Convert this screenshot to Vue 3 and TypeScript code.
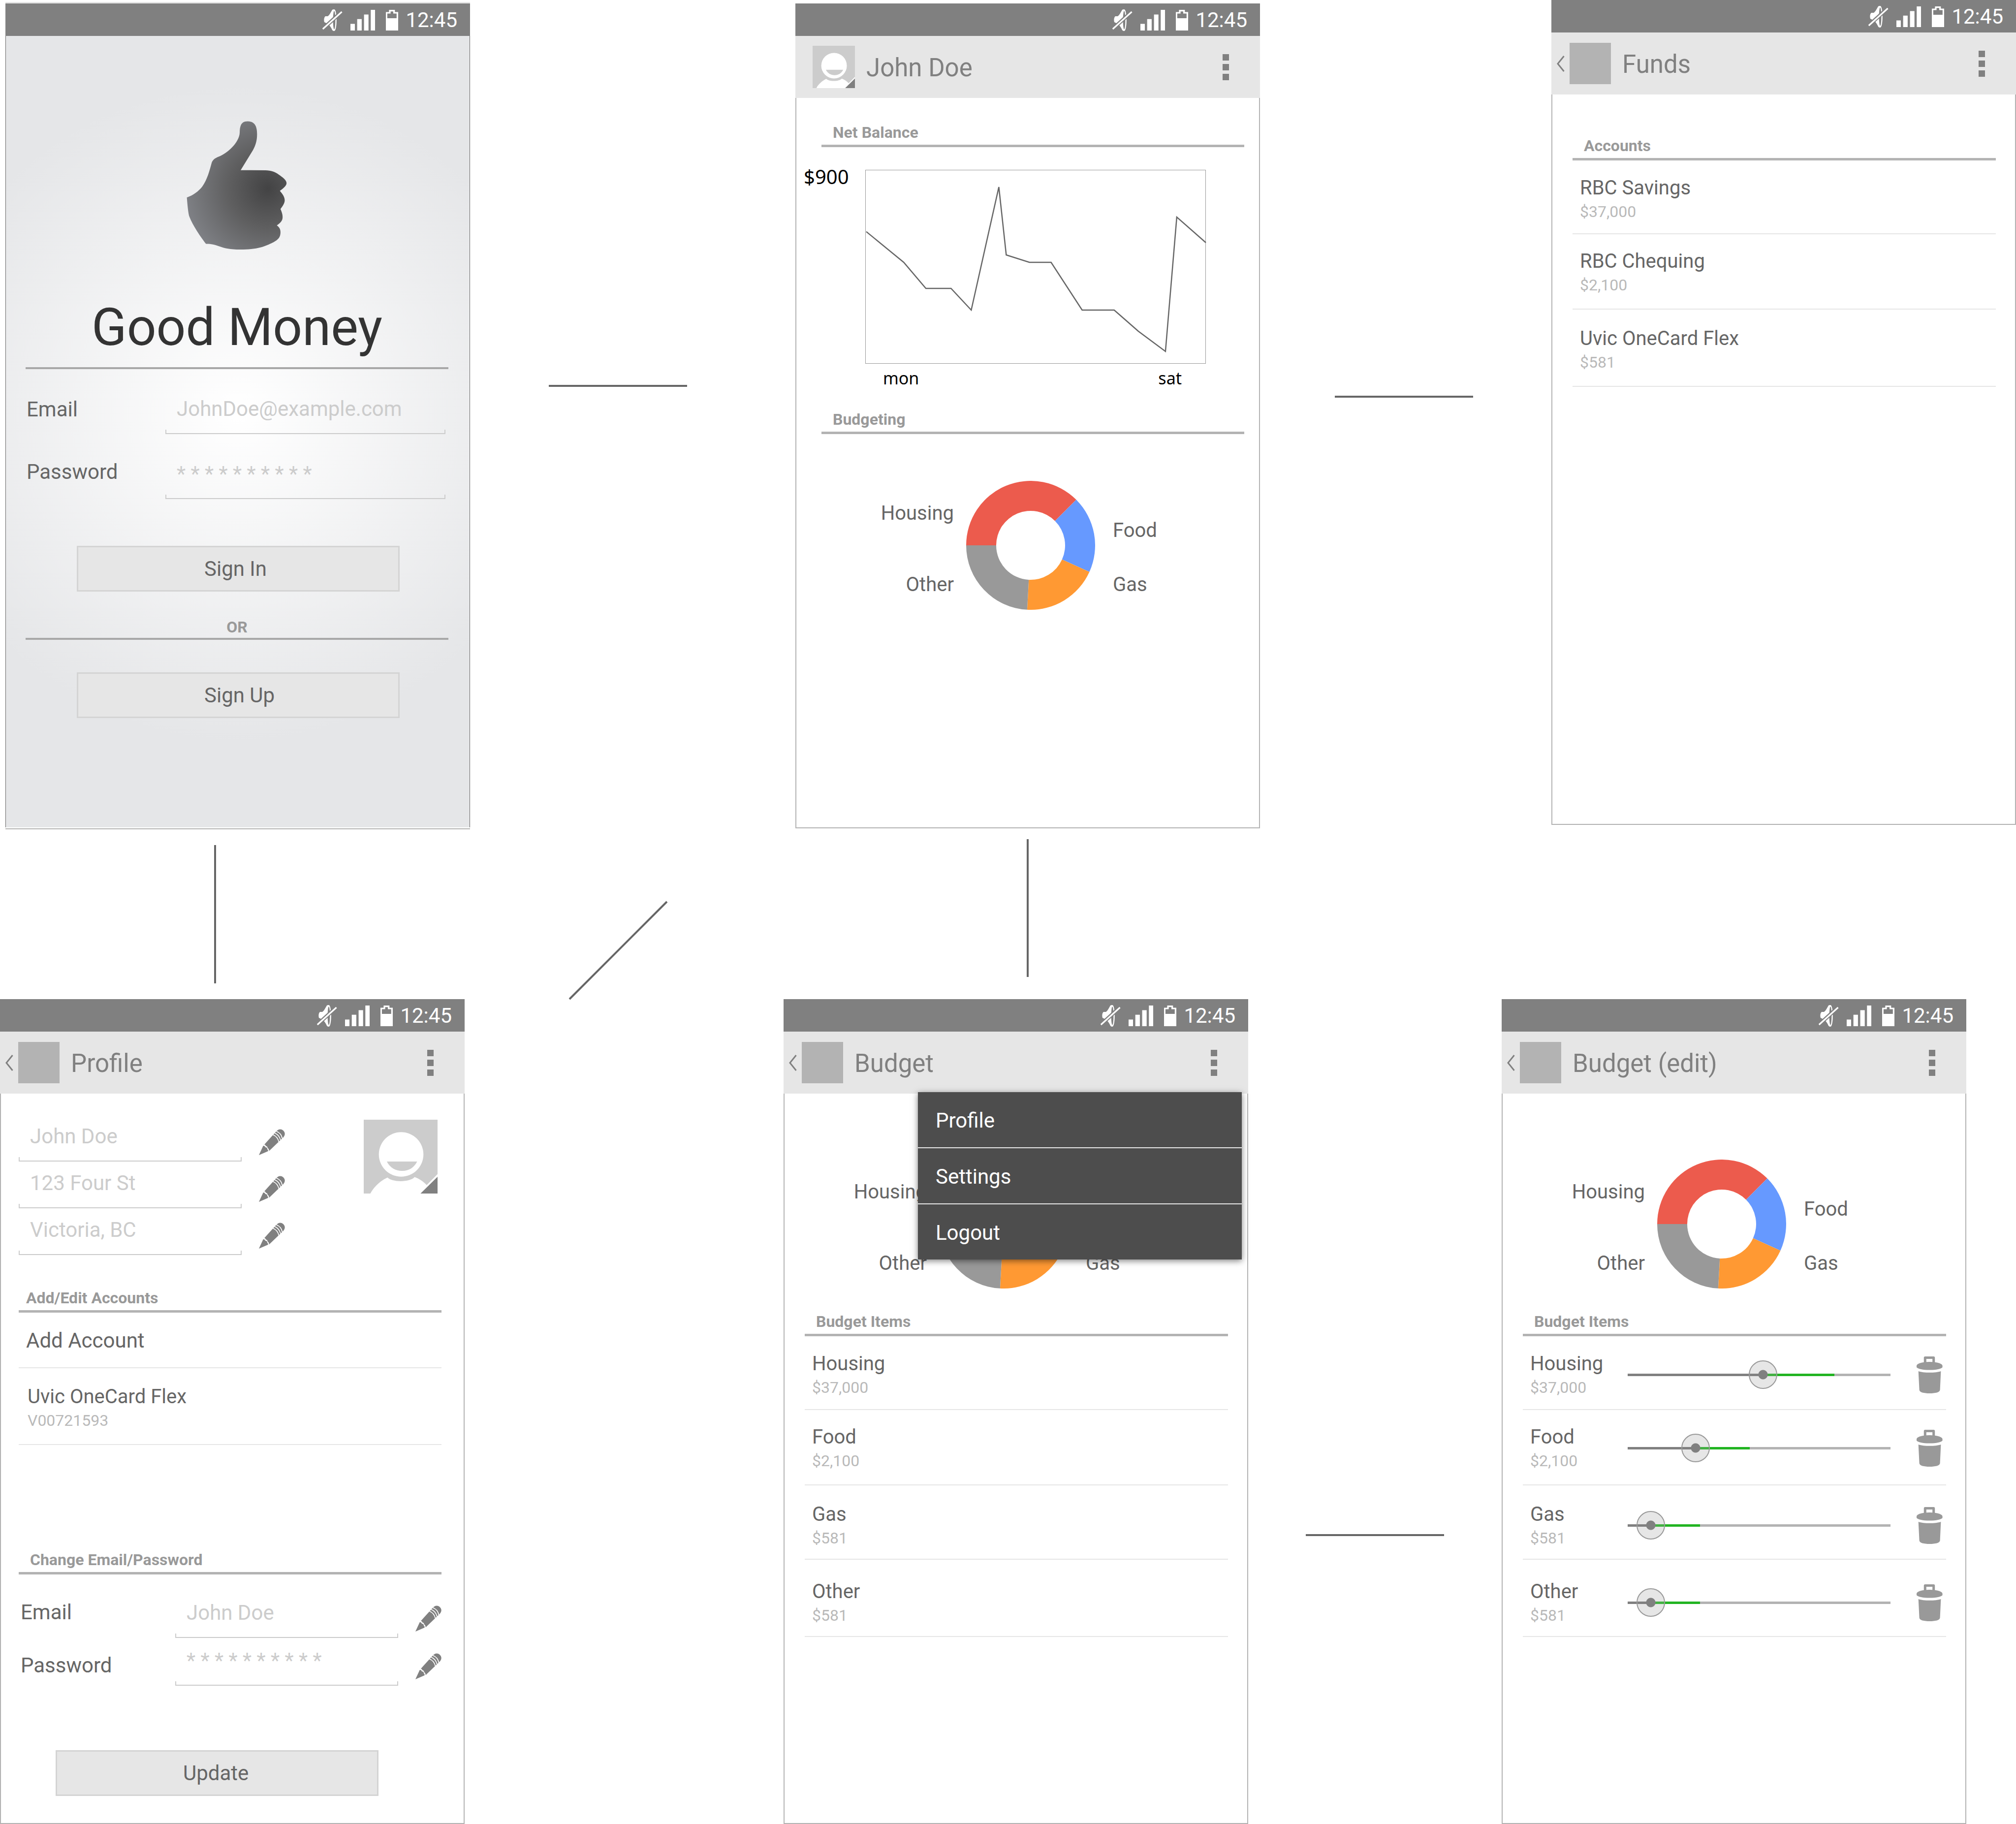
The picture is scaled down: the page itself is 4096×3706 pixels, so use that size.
<script setup lang="ts">
type ScreenKind = 'login' | 'home' | 'funds' | 'profile' | 'budget' | 'edit'

interface Screen {
  kind: ScreenKind
  title?: string
}

interface Entry {
  name: string
  amount: string
}

interface BudgetEntry extends Entry {
  id: string
  value: number
  spent: number
  limit: number
}

const rows: { name: string; screens: Screen[] }[] = [
  {
    name: 'upper',
    screens: [{ kind: 'login' }, { kind: 'home', title: 'John Doe' }, { kind: 'funds', title: 'Funds' }],
  },
  {
    name: 'lower',
    screens: [
      { kind: 'profile', title: 'Profile' },
      { kind: 'budget', title: 'Budget' },
      { kind: 'edit', title: 'Budget (edit)' },
    ],
  },
]

const accounts: Entry[] = [
  { name: 'RBC Savings', amount: '$37,000' },
  { name: 'RBC Chequing', amount: '$2,100' },
  { name: 'Uvic OneCard Flex', amount: '$581' },
]

const budget: BudgetEntry[] = [
  { id: 'housing', name: 'Housing', amount: '$37,000', value: 51.7, spent: 51.5, limit: 78.7 },
  { id: 'food', name: 'Food', amount: '$2,100', value: 22.8, spent: 25.8, limit: 46.4 },
  { id: 'gas', name: 'Gas', amount: '$581', value: 3.8, spent: 8.8, limit: 27.5 },
  { id: 'other', name: 'Other', amount: '$581', value: 3.8, spent: 8.8, limit: 27.5 },
]

const details = [
  { id: 'full-name', label: 'Name', hint: 'John Doe' },
  { id: 'street', label: 'Street', hint: '123 Four St' },
  { id: 'city', label: 'City', hint: 'Victoria, BC' },
]

const menu = ['Profile', 'Settings', 'Logout']
const stars = '* * * * * * * * * *'

// Ring segment between two clockwise angles, in degrees from the positive x axis.
function segment(from: number, to: number): string {
  const outer = 131
  const inner = 70
  const at = (r: number, deg: number) => {
    const a = (deg * Math.PI) / 180
    return `${(131 + r * Math.cos(a)).toFixed(2)} ${(131 + r * Math.sin(a)).toFixed(2)}`
  }
  return `M${at(outer, from)} A${outer} ${outer} 0 0 1 ${at(outer, to)} L${at(inner, to)} A${inner} ${inner} 0 0 0 ${at(inner, from)}Z`
}

const segments = [
  { color: '#ec5b4d', d: segment(180, 315) },
  { color: '#6699ff', d: segment(315, 384.3) },
  { color: '#ff9933', d: segment(24.3, 93.1) },
  { color: '#999999', d: segment(93.1, 180) },
]

const hasDonut = (kind: ScreenKind) => kind === 'home' || kind === 'budget' || kind === 'edit'
</script>

<template>
  <svg class="sprite" aria-hidden="true">
    <symbol id="mute" viewBox="0 0 41 44">
      <path fill="#fff" d="M4 26C3 22 3 17 6 14H11C15 11 17 6 20 1Q21 0 24 0C27 0 28.8 10 28.8 22S27 44 24 44Q21 44 20 42C18 37 15 33 12 30Z" />
      <ellipse cx="24" cy="22" rx="2.4" ry="18.5" fill="#808080" />
      <path d="M-1 41.500 40 4" stroke="#808080" stroke-width="7.500" />
      <path d="M.8 40 39.500 5" stroke="#fff" stroke-width="3.200" />
    </symbol>
    <symbol id="signal" viewBox="0 0 50 42">
      <path fill="#fff" d="M0 28.500H9V42H0ZM13.700 18.800H22.900V42H13.700ZM27.600 9.500H36.700V42H27.600ZM41.300 0H50.300V42H41.300Z" />
    </symbol>
    <symbol id="battery" viewBox="0 0 25 42">
      <path fill="#fff" fill-rule="evenodd" d="M6.400 0H18.300V4.400H25V42H0V4.400H6.400ZM9.600 3.200V7.600H2.900V17H21.800V7.600H15V3.200Z" />
    </symbol>
    <symbol id="avatar" viewBox="0 0 150 150">
      <path fill="#ccc" d="M0 0H150V150H0Z" />
      <circle cx="76" cy="70.500" r="45.300" fill="#fff" />
      <path fill="#ccc" d="M47 85H108.500C102 97.500 92 104 78 104S53.500 97.500 47 85Z" />
      <path fill="#fff" d="M13.500 150C20 137 34 124 48.400 117.500C58 127.500 94 127.500 103.400 116.500C113 120 122 126 128.500 133.400L112 150Z" />
      <path fill="#fff" d="M150 110.500V116L115.500 150H111Z" />
      <path fill="#808080" d="M150 116V150H115.500Z" />
    </symbol>
    <symbol id="pencil" viewBox="0 0 53 53">
      <path fill="#808080" d="M0 53 8.800 34C10.500 33.500 12.500 34.500 13 37C15.500 37 17.300 38.500 17 41C18.500 42 19 43.500 18.600 45Z" />
      <path fill="#808080" d="M11 31.500 34.500 5.500C39 .3 44.500-1.500 49.500 3C54 7.500 53.500 12.500 49.500 17L20.800 44.500C20.800 41.500 19.500 39.500 17.800 38.500C17.300 35.500 16 34.500 14 34.500C13.800 32.800 12.600 31.700 11 31.500Z" />
      <path fill="none" stroke="#fff" stroke-width="1.700" d="M28.500 11.500Q38 15.500 40.500 26M32 8Q41.500 12 44 22.500M35.500 4.500Q45.500 8.500 47.500 19" />
    </symbol>
    <symbol id="trash" viewBox="0 0 53 75">
      <path fill="#999" fill-rule="evenodd" d="M14.800 12V2.500Q14.800 0 17.300 0H34.700Q37.200 0 37.200 2.500V12ZM19.800 5V12H32.200V5Z" />
      <path fill="#999" d="M0 19C0 15 10 11 26.300 11S52.600 15 52.600 19V22C50 25.500 40 27.600 26.300 27.600S2.500 25.500 0 22Z" />
      <path fill="#999" d="M3.700 30C15 33.800 38 33.800 49.400 30L47.600 68C47 73 38 75 26.500 75S6 73 5.600 68Z" />
    </symbol>
  </svg>

  <main class="board">
    <div v-for="row in rows" :key="row.name" class="row" :class="row.name">
      <article v-for="screen in row.screens" :key="screen.kind" class="phone" :class="screen.kind">
        <div class="status">
          <svg class="mute"><use href="#mute" /></svg>
          <svg class="signal"><use href="#signal" /></svg>
          <svg class="battery"><use href="#battery" /></svg>
          <time class="clock">12:45</time>
        </div>

        <header v-if="screen.title" class="bar">
          <svg v-if="screen.kind === 'home'" class="avatar-small"><use href="#avatar" /></svg>
          <button v-else class="back" type="button" aria-label="Back">
            <svg class="chevron" viewBox="0 0 17 33">
              <path d="M15.500 1 3 16.500 15.500 32" fill="none" stroke="#808080" stroke-width="3" />
            </svg>
            <span class="app-icon"></span>
          </button>
          <h1 class="title">{{ screen.title }}</h1>
          <button class="more" type="button" aria-label="More options"><i></i><i></i><i></i></button>

          <nav v-if="screen.kind === 'budget'" class="menu">
            <a v-for="item in menu" :key="item" href="#">{{ item }}</a>
          </nav>
        </header>

        <section class="content">
          <template v-if="screen.kind === 'login'">
            <svg class="thumb" viewBox="0 0 204 262">
              <defs>
                <radialGradient id="thumb-shade" gradientUnits="userSpaceOnUse" cx="165" cy="137" r="178">
                  <stop offset="0" stop-color="#434344" />
                  <stop offset=".45" stop-color="#5f5f60" />
                  <stop offset="1" stop-color="#828489" />
                </radialGradient>
              </defs>
              <path
                fill="url(#thumb-shade)"
                d="M108 24C108 8 112 .5 124 .5C137 .5 143.300 8 143.300 27C143.300 40 140 50 135 59L110 99.700L160 100C172 100 181 104 187 108.500C195 114 203.200 120 203.200 126C203.200 132 196 137 189.600 141.800C196 149 199.500 155 199.500 161C199.500 167 195 173 190.900 178.800C194 186 195.200 190 195.200 195C195.200 202 192 206 183.500 211.900C189 216 190.900 220 190.900 226C190.900 236 186 241 177 246C160 254 148 261 109 261C88 261 78 258.500 68 255C56 250.500 47 249 39.500 249.500C25 231 10 207 4.900 191.800C2.500 180 1.500 165 .6 155.300C14 150.500 24 143 32 133C42 119 47 100 51 85C53 79 57 75.500 66 72C82 66 107 44 108 24Z"
              />
            </svg>
            <h1 class="brand">Good Money</h1>
            <form class="login-form" @submit.prevent>
              <div class="credentials">
                <div class="labels">
                  <label for="login-email">Email</label>
                  <label for="login-password">Password</label>
                </div>
                <div class="inputs">
                  <input id="login-email" class="field" type="email" placeholder="JohnDoe@example.com" />
                  <input id="login-password" class="field" type="password" :placeholder="stars" />
                </div>
              </div>
              <button class="action" type="submit">Sign In</button>
            </form>
            <p class="or">OR</p>
            <button class="action" type="button">Sign Up</button>
          </template>

          <template v-if="screen.kind === 'home'">
            <h2 class="heading">Net Balance</h2>
            <figure class="chart">
              <span class="y-label">$900</span>
              <svg class="plot" viewBox="0 0 691 394" preserveAspectRatio="none">
                <rect x=".5" y=".5" width="690" height="393" fill="none" stroke="#999" />
                <polyline
                  points="2,125.600 78,188 123,241 174,241 215,285 271,35 286,173 333,188 377,188 440,285 505,285 554,328 609,369 632,96 691,148"
                  fill="none"
                  stroke="#666"
                  stroke-width="2.500"
                />
              </svg>
              <figcaption class="x-labels"><span>mon</span><span>sat</span></figcaption>
            </figure>
            <h2 class="heading">Budgeting</h2>
          </template>

          <figure v-if="hasDonut(screen.kind)" class="donut">
            <div class="legend left"><span>Housing</span><span>Other</span></div>
            <svg class="ring" viewBox="0 0 262 262">
              <path v-for="part in segments" :key="part.color" :d="part.d" :fill="part.color" />
            </svg>
            <div class="legend right"><span>Food</span><span>Gas</span></div>
          </figure>

          <template v-if="screen.kind === 'funds'">
            <h2 class="heading">Accounts</h2>
            <ul class="list">
              <li v-for="account in accounts" :key="account.name" class="item">
                <div class="entry">
                  <span class="name">{{ account.name }}</span>
                  <span class="amount">{{ account.amount }}</span>
                </div>
              </li>
            </ul>
          </template>

          <template v-if="screen.kind === 'budget' || screen.kind === 'edit'">
            <h2 class="heading">Budget Items</h2>
            <ul class="list">
              <li v-for="entry in budget" :key="entry.id" class="item">
                <div class="entry">
                  <label v-if="screen.kind === 'edit'" class="name" :for="'range-' + entry.id">{{ entry.name }}</label>
                  <span v-else class="name">{{ entry.name }}</span>
                  <span class="amount">{{ entry.amount }}</span>
                </div>
                <template v-if="screen.kind === 'edit'">
                  <input
                    :id="'range-' + entry.id"
                    class="slider"
                    type="range"
                    min="0"
                    max="100"
                    step="0.1"
                    :value="entry.value"
                    :style="{ '--spent': entry.spent + '%', '--limit': entry.limit + '%' }"
                  />
                  <button class="icon-button" type="button" :aria-label="'Delete ' + entry.name">
                    <svg class="trash"><use href="#trash" /></svg>
                  </button>
                </template>
              </li>
            </ul>
          </template>

          <template v-if="screen.kind === 'profile'">
            <div class="person">
              <div class="details">
                <div v-for="detail in details" :key="detail.id" class="detail">
                  <input :id="detail.id" class="field" type="text" :aria-label="detail.label" :placeholder="detail.hint" />
                  <button class="icon-button edit-button" type="button" :aria-label="'Edit ' + detail.label">
                    <svg class="pencil"><use href="#pencil" /></svg>
                  </button>
                </div>
              </div>
              <svg class="avatar-large"><use href="#avatar" /></svg>
            </div>
            <h2 class="heading">Add/Edit Accounts</h2>
            <ul class="list">
              <li class="item add"><a class="add-link" href="#">Add Account</a></li>
              <li class="item">
                <div class="entry">
                  <span class="name">Uvic OneCard Flex</span>
                  <span class="amount">V00721593</span>
                </div>
              </li>
            </ul>
            <h2 class="heading change">Change Email/Password</h2>
            <form @submit.prevent>
              <div class="credentials">
                <div class="labels">
                  <label for="new-email">Email</label>
                  <label for="new-password">Password</label>
                </div>
                <div class="inputs">
                  <div class="detail">
                    <input id="new-email" class="field" type="text" placeholder="John Doe" />
                    <button class="icon-button edit-button" type="button" aria-label="Edit email">
                      <svg class="pencil"><use href="#pencil" /></svg>
                    </button>
                  </div>
                  <div class="detail">
                    <input id="new-password" class="field" type="password" :placeholder="stars" />
                    <button class="icon-button edit-button" type="button" aria-label="Edit password">
                      <svg class="pencil"><use href="#pencil" /></svg>
                    </button>
                  </div>
                </div>
              </div>
              <button class="action" type="submit">Update</button>
            </form>
          </template>
        </section>
      </article>
    </div>

    <svg class="links" viewBox="0 0 4096 3706" preserveAspectRatio="none" aria-hidden="true">
      <path
        d="M1115 784H1396M2712 806H2993M437 1717V1998M2088 1705V1985M1157 2030 1355 1832M2653 3119H2934"
        fill="none"
        stroke="#666"
        stroke-width="4"
      />
    </svg>
  </main>
</template>

<style>
body {
  margin: 0;
  background: #fff;
}
</style>

<style scoped>
.sprite {
  position: absolute;
  width: 0;
  height: 0;
}

.board {
  position: relative;
  display: flex;
  flex-direction: column;
  gap: 347px;
  font-family: Roboto, "Liberation Sans", sans-serif;
  font-size: 42px;
  line-height: 48px;
  color: #666;
}

.board * {
  box-sizing: border-box;
}

.board svg {
  display: block;
  flex: none;
}

.row {
  display: grid;
  align-items: start;
}

.upper {
  grid-template-columns: 11fr 944fr 661fr 944fr 592fr 944fr;
}

.lower {
  grid-template-columns: 944fr 648fr 944fr 515fr 944fr 101fr;
}

.phone {
  display: flex;
  flex-direction: column;
  aspect-ratio: 944 / 1676;
  min-width: 0;
}

.login { grid-column: 2; margin-top: 7px; }
.home { grid-column: 4; margin-top: 7px; }
.funds { grid-column: 6; }
.profile { grid-column: 1; }
.budget { grid-column: 3; }
.edit { grid-column: 5; }

.links {
  position: absolute;
  inset: 0;
  width: 100%;
  height: 100%;
  pointer-events: none;
}

button {
  border: 0;
  padding: 0;
  background: none;
  font: inherit;
  color: inherit;
}

h1,
h2,
p,
ul,
figure {
  margin: 0;
  padding: 0;
  font-weight: 400;
}

/* Status bar */
.status {
  display: flex;
  align-items: center;
  justify-content: flex-end;
  height: 66px;
  padding: 2px 26px 0 0;
  background: #808080;
  color: #fff;
}

.login .status {
  box-shadow: 0 -3px 0 #e6e6e6;
}

.mute { width: 41px; height: 44px; margin-right: 16px; }
.signal { width: 50px; height: 42px; margin-right: 22px; }
.battery { width: 25px; height: 42px; margin-right: 15px; }

/* Title bar */
.bar {
  position: relative;
  display: flex;
  align-items: center;
  height: 126px;
  padding: 0 63px 0 10px;
  background: #e6e6e6;
  color: #808080;
}

.back {
  display: flex;
  align-items: center;
  gap: 10px;
}

.chevron { width: 17px; height: 33px; }

.app-icon {
  width: 84px;
  height: 84px;
  background: #b3b3b3;
}

.avatar-small {
  width: 86px;
  height: 86px;
  margin-left: 25px;
}

.title {
  flex: 1;
  padding: 4px 0 0 23px;
  font-size: 51px;
  line-height: 60px;
}

.more {
  display: flex;
  flex-direction: column;
  gap: 7px;
}

.more i {
  width: 13px;
  height: 13px;
  background: #808080;
}

.menu {
  position: absolute;
  top: 123px;
  right: 13px;
  display: flex;
  flex-direction: column;
  gap: 2px;
  width: 658px;
  background: #e6e6e6;
  box-shadow: 0 3px 12px rgba(0, 0, 0, 0.5);
}

.menu a {
  height: 112px;
  padding: 2px 36px 0;
  background: #4d4d4d;
  color: #fff;
  line-height: 112px;
  text-decoration: none;
}

/* Screen body */
.content {
  flex: 1;
  display: flex;
  flex-direction: column;
  padding: 0 41px 0 43px;
  box-shadow: inset 2px 0 #b3b3b3, inset -2px 0 #b3b3b3, inset 0 -2px #b3b3b3;
}

.heading {
  padding: 0 23px 5px;
  border-bottom: 5px solid #b3b3b3;
  color: #999;
  font-size: 32px;
  font-weight: 700;
  line-height: 40px;
}

.field {
  display: block;
  width: 100%;
  height: 95px;
  padding: 0 23px 8px;
  border: 0;
  border-radius: 0;
  background:
    linear-gradient(#ccc, #ccc) left bottom / 2px 9px no-repeat,
    linear-gradient(#ccc, #ccc) right bottom / 2px 9px no-repeat,
    linear-gradient(#ccc, #ccc) left bottom / 100% 2px no-repeat;
  font: inherit;
  color: #ccc;
  outline: none;
}

.field::placeholder {
  color: #ccc;
  opacity: 1;
}

.action {
  display: block;
  width: 656px;
  height: 93px;
  padding-left: 256px;
  border: 3px solid #d4d4d4;
  background: #e6e6e6;
  text-align: left;
}

.credentials {
  display: flex;
}

.labels,
.inputs {
  display: flex;
  flex-direction: column;
}

.inputs {
  flex: 1;
}

/* Login */
.login .content {
  padding: 173px 44px 0 41px;
  border-bottom: 2px solid #fff;
  background: radial-gradient(circle at 50% 767px, #fff 0, #e5e6e8 666px);
  box-shadow: inset 1px 0 #666, inset -1px 0 #666, 0 2px #b3b3b3;
}

.thumb {
  width: 204px;
  height: 262px;
  margin-left: 327px;
}

.brand {
  padding: 98px 0 20px;
  border-bottom: 4px solid #a8a8a8;
  color: #333;
  font-size: 105px;
  line-height: 120px;
  text-align: center;
}

.login .credentials {
  padding: 37px 6px 95px 2px;
}

.login .labels {
  gap: 79px;
  width: 282px;
  padding-top: 21px;
}

.login .inputs {
  gap: 37px;
}

.login .action {
  margin-left: 104px;
}

.or {
  margin: 52px 0 66px;
  padding-bottom: 2px;
  border-bottom: 4px solid #a8a8a8;
  color: #999;
  font-size: 32px;
  font-weight: 700;
  line-height: 40px;
  text-align: center;
}

/* Home */
.home .content {
  padding: 50px 32px 0 53px;
}

.chart {
  display: grid;
  grid-template-columns: 89px 1fr;
  padding: 36px 78px 44px 0;
  color: #000;
  font-family: "Noto Sans", sans-serif;
}

.y-label {
  margin-left: -36px;
  font-size: 40px;
}

.plot {
  width: 100%;
  height: 394px;
  margin-top: 10px;
  overflow: visible;
}

.x-labels {
  grid-column: 2;
  display: flex;
  justify-content: space-between;
  padding: 9px 49px 0 36px;
  font-size: 34px;
  line-height: 40px;
}

/* Donut */
.donut {
  display: grid;
  grid-template-columns: 273px 262px 1fr;
  margin: 134px 0 47px;
  font-size: 40px;
}

.home .donut {
  grid-template-columns: 294px 262px 1fr;
  margin: 95px 0 0;
}

.ring {
  width: 262px;
  height: 262px;
}

.legend {
  display: flex;
  flex-direction: column;
}

.left {
  align-items: flex-end;
  gap: 97px;
  padding: 42px 25px 0 0;
}

.right {
  gap: 62px;
  padding: 77px 0 0 36px;
}

/* Lists */
.list {
  list-style: none;
}

.item {
  display: flex;
  align-items: center;
  padding: 32px 7px 24px 15px;
  border-bottom: 2px solid #e6e6e6;
}

.item:nth-child(2) { padding-top: 31px; padding-bottom: 28px; }
.item:nth-child(3) { padding-top: 35px; padding-bottom: 22px; }
.item:nth-child(4) { padding-top: 41px; padding-bottom: 22px; }

.entry {
  display: flex;
  flex-direction: column;
  gap: 4px;
}

.name {
  font-size: 40px;
}

.amount {
  color: #b9b9b9;
  font-size: 32px;
  line-height: 40px;
}

.funds .content {
  padding-top: 84px;
}

.funds .item:nth-child(3) {
  padding-bottom: 28px;
}

/* Budget editor */
.edit .entry {
  width: 198px;
}

.slider {
  flex: 1;
  min-width: 0;
  height: 58px;
  margin: 0 53px 0 0;
  appearance: none;
  background: linear-gradient(
      to right,
      #808080 var(--spent),
      #22b422 var(--spent) var(--limit),
      #b3b3b3 var(--limit)
    )
    center / 100% 5px no-repeat;
}

.slider::-webkit-slider-thumb {
  width: 58px;
  height: 58px;
  appearance: none;
  border: 2px solid #999;
  border-radius: 50%;
  background:
    radial-gradient(circle, #808080 9px, transparent 10px),
    linear-gradient(to right, #808080 50%, #44b044 50%) center / 100% 5px no-repeat,
    #e6e6e6;
}

.trash { width: 53px; height: 75px; }

/* Profile */
.profile .content {
  padding: 43px 47px 0 38px;
}

.person {
  display: flex;
  justify-content: space-between;
  padding: 0 8px 67px 0;
}

.details {
  display: flex;
  flex-direction: column;
}

.detail {
  display: flex;
  align-items: flex-end;
  gap: 35px;
}

.detail .field {
  width: 453px;
}

.edit-button {
  margin-bottom: 13px;
}

.pencil { width: 53px; height: 53px; }

.avatar-large {
  width: 150px;
  height: 150px;
  margin-top: 10px;
}

.profile .heading {
  padding-left: 15px;
}

.profile .change {
  margin-top: 213px;
  padding-left: 23px;
}

.profile .item {
  padding: 34px 18px 28px;
}

.profile .add {
  padding: 33px 15px 30px;
}

.add-link {
  color: inherit;
  text-decoration: none;
}

.profile .labels {
  gap: 60px;
  width: 320px;
  padding: 53px 0 0 4px;
}

.profile .inputs {
  gap: 2px;
  padding-top: 34px;
}

.profile .action {
  margin: 131px 0 0 75px;
}
</style>
